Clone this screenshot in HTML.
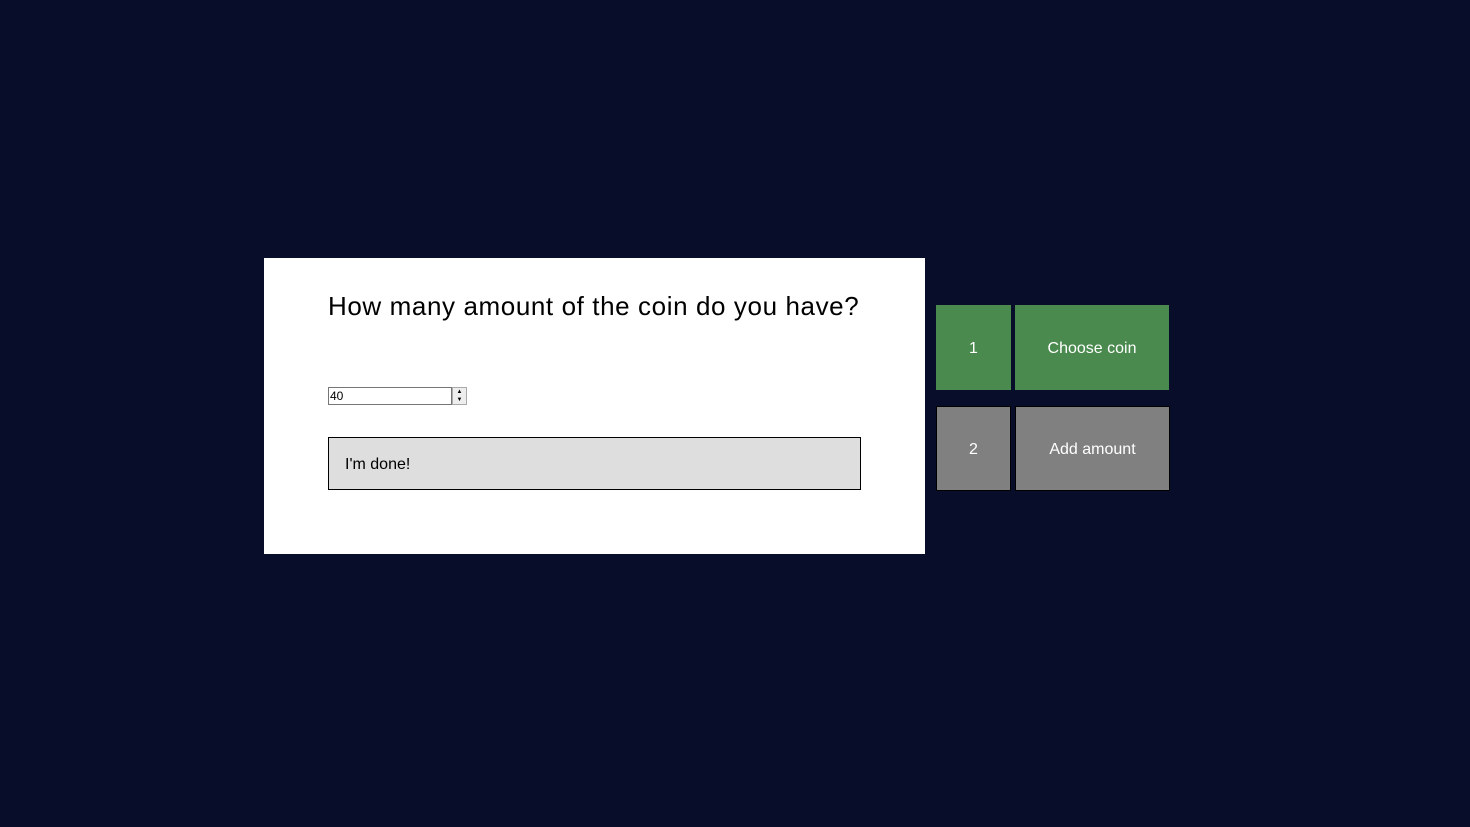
<!DOCTYPE html>
<html><head><style>
body{margin:0;width:1470px;height:827px;background:#080d2a;position:relative;overflow:hidden;font-family:"Liberation Sans",sans-serif}
.a{position:absolute;box-sizing:border-box}
.card{left:264px;top:258px;width:661px;height:296px;background:#fff}
h1{position:absolute;left:328px;top:291px;margin:0;font-weight:normal;font-size:26px;color:#000;white-space:nowrap;letter-spacing:0.6px}
.inp{left:328px;top:387px;width:124px;height:18px;border:1px solid #767676;font-size:12px;padding-left:1px;line-height:17px}
.spin{left:452px;top:387px;width:15px;height:18px;border:1px solid #aaa;background:#eee;font-size:6px;text-align:center;line-height:8px}
.btn{left:328px;top:437px;width:533px;height:53px;border:1px solid #000;background:#dedede;font-size:16px;padding-left:16px;line-height:53px}
.box{color:#fff;font-size:16px;display:flex;align-items:center;justify-content:center;padding-top:2px}
.g{background:#4b8a4e}
.gr{background:#808080;border:1px solid #000}
</style></head><body>
<div class="a card"></div>
<h1>How many amount of the coin do you have?</h1>
<div class="a inp">40</div>
<div class="a spin">▲<br>▼</div>
<div class="a btn">I'm done!</div>
<div class="a box g" style="left:936px;top:305px;width:75px;height:85px">1</div>
<div class="a box g" style="left:1015px;top:305px;width:154px;height:85px">Choose coin</div>
<div class="a box gr" style="left:936px;top:406px;width:75px;height:85px">2</div>
<div class="a box gr" style="left:1015px;top:406px;width:155px;height:85px">Add amount</div>
</body></html>
